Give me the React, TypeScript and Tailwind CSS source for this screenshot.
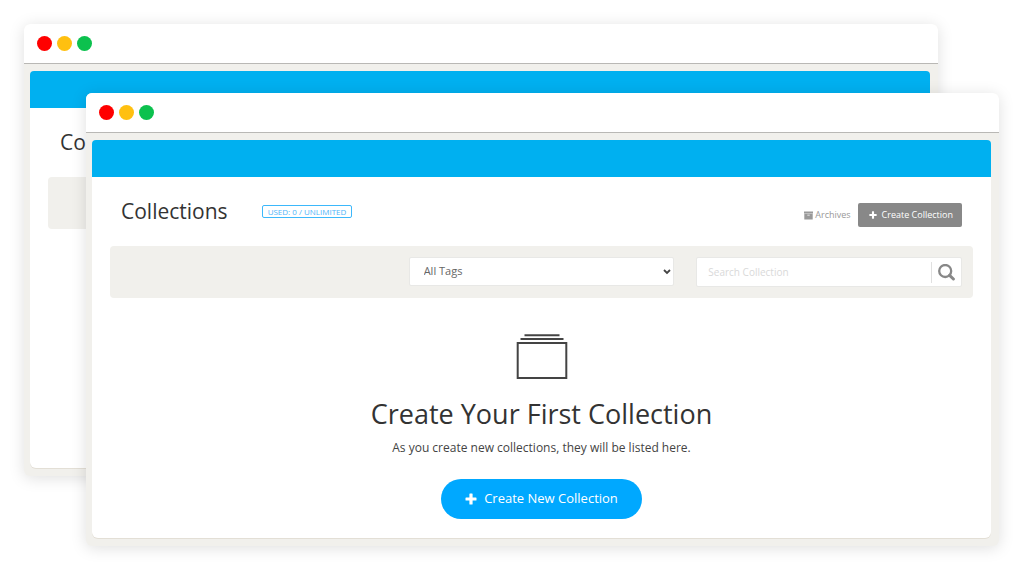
import type { ReactNode } from "react";

function BrowserWindow({ className, children }: { className: string; children: ReactNode }) {
  return (
    <div
      className={`flex flex-col rounded-md bg-[#f1f0ec] shadow-[0_2px_16px_rgba(0,0,0,0.13)] ${className}`}
    >
      <div className="flex h-10 shrink-0 items-center gap-[5px] rounded-t-md border-b border-[#b9b8b5] bg-white pl-[13px]">
        <span className="size-[15px] rounded-full bg-[#ff0000]" />
        <span className="size-[15px] rounded-full bg-[#ffc010]" />
        <span className="size-[15px] rounded-full bg-[#0cc14e]" />
      </div>
      <div className="flex grow flex-col pt-[7px] pr-2 pb-2 pl-1.5">
        <div className="h-[37px] shrink-0 rounded-t bg-[#00b0f0]" />
        <div className="grow rounded-b-md bg-white px-[18px] shadow-[0_1px_0_#e3dfd6]">{children}</div>
      </div>
    </div>
  );
}

function CollectionIcon() {
  return (
    <svg width="52" height="46" viewBox="0 0 52 46" fill="none" stroke="#444" aria-hidden="true">
      <path d="M8.5 1.3H43.5" strokeWidth="2" />
      <path d="M4.5 5H47.5" strokeWidth="2" />
      <rect x="1.7" y="9" width="48.6" height="35" strokeWidth="2" />
    </svg>
  );
}

function PlusIcon({ className }: { className: string }) {
  return (
    <svg viewBox="0 0 12 12" className={className} fill="currentColor" aria-hidden="true">
      <path d="M5 .5h2q.6 0 .6.6v3.3h3.3q.6 0 .6.6v2q0 .6-.6.6H7.6v3.3q0 .6-.6.6H5q-.6 0-.6-.6V7.6H1.1q-.6 0-.6-.6V5q0-.6.6-.6h3.3V1.1q0-.6.6-.6z" />
    </svg>
  );
}

function ArchiveIcon() {
  return (
    <svg width="9" height="9" viewBox="0 0 9 9" fill="currentColor" aria-hidden="true">
      <path d="M0 .5h9v2H0z" />
      <path fillRule="evenodd" d="M.3 2.7h8.4v5.8H.3zM3.3 3.7v.8h2.4v-.8z" />
    </svg>
  );
}

function SearchIcon() {
  return (
    <svg width="17" height="17" viewBox="0 0 17 17" fill="none" stroke="currentColor" aria-hidden="true">
      <circle cx="7.2" cy="7" r="6" strokeWidth="2.3" />
      <path d="M11.6 11.4l3.8 3.6" strokeWidth="3" strokeLinecap="round" />
    </svg>
  );
}

export default function App() {
  return (
    <main className="relative flex min-h-screen flex-col overflow-hidden bg-white pt-[93px] pr-[25px] pb-[25px] pl-[86px] font-['Open_Sans',sans-serif] text-[#333]">
      <BrowserWindow className="absolute top-6 right-[86px] bottom-[95px] left-6">
        <div className="flex h-[69px] items-center px-3">
          <div className="text-[21px]">Collections</div>
        </div>
        <div className="h-[52px] rounded bg-[#f1f0ec]" />
      </BrowserWindow>

      <BrowserWindow className="relative grow">
        <header className="flex h-[69px] items-center px-[11px]">
          <h1 className="text-[21px]">Collections</h1>
          <span className="ml-[34px] rounded-xs border border-[#3db8fb] px-[5px] text-[8px] leading-[11px] text-[#4fb4f8]">
            USED: 0 / UNLIMITED
          </span>
          <div className="ml-auto flex items-center gap-[7px] pt-[7px] text-[9px]">
            <a href="#archives" className="flex items-center gap-0.5 text-[#999]">
              <ArchiveIcon />
              Archives
            </a>
            <button
              type="button"
              className="flex h-6 items-center gap-[5px] rounded-xs bg-[#888] pr-[9px] pl-[11px] text-white"
            >
              <PlusIcon className="size-2" />
              Create Collection
            </button>
          </div>
        </header>

        <div className="grid grid-cols-3 gap-[22px] rounded bg-[#f1f0ec] p-[11px]">
          <div className="relative col-start-2">
            <select
              aria-label="Tags"
              className="h-[29px] w-full appearance-none rounded-xs border border-[#e8e8e6] bg-white pl-[14px] text-[11px] text-[#666]"
            >
              <option>All Tags</option>
            </select>
            <svg
              viewBox="0 0 8 6"
              className="pointer-events-none absolute top-3 right-[3px] h-1.5 w-2"
              fill="none"
              stroke="#444"
              strokeWidth="1.8"
              aria-hidden="true"
            >
              <path d="M1 1l3 3 3-3" />
            </svg>
          </div>
          <div className="flex h-[30px] items-center rounded-xs border border-[#e8e8e6] bg-white">
            <input
              type="search"
              aria-label="Search Collection"
              placeholder="Search Collection"
              className="min-w-0 grow pl-[11px] text-[10px] outline-none placeholder:text-[#d9d9d9]"
            />
            <button
              type="button"
              aria-label="Search"
              className="flex h-[21px] w-[30px] items-center justify-center border-l border-[#e0e0e0] text-[#888]"
            >
              <SearchIcon />
            </button>
          </div>
        </div>

        <section className="flex flex-col items-center pt-9 pb-[19px] text-center">
          <CollectionIcon />
          <h2 className="mt-4 text-[27px] leading-9">Create Your First Collection</h2>
          <p className="mt-1.5 text-xs leading-5 text-[#444]">
            As you create new collections, they will be listed here.
          </p>
          <button
            type="button"
            className="mt-[21px] flex h-10 items-center gap-[7px] rounded-full bg-[#00a8ff] px-6 text-[13px] text-white"
          >
            <PlusIcon className="size-3" />
            Create New Collection
          </button>
        </section>
      </BrowserWindow>
    </main>
  );
}
